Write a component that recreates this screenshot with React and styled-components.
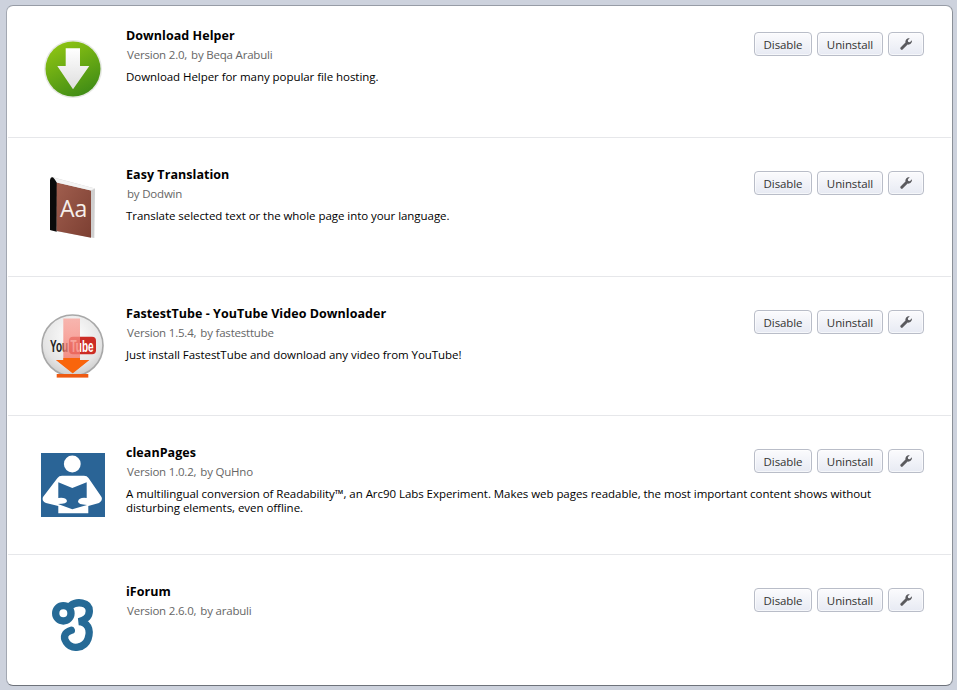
import React from "react";
import styled, { createGlobalStyle } from "styled-components";

const GlobalStyle = createGlobalStyle`
  html, body {
    margin: 0;
    height: 100%;
    background: #cdd2dd;
    overflow: hidden;
  }
`;

const Panel = styled.div`
  box-sizing: border-box;
  width: 947px;
  height: 681px;
  margin: 5px 0 0 6px;
  background: #fff;
  border: 1px solid #a3a8b2;
  border-top-color: #979ca6;
  border-bottom-color: #6d727a;
  border-right-color: #8b9098;
  border-radius: 7px;
  font-family: "Open Sans", "Noto Sans", sans-serif;
  color: #000;
`;

const Row = styled.div`
  box-sizing: border-box;
  display: grid;
  grid-template-columns: 64px 1fr auto;
  grid-template-rows: 19px 19px auto;
  column-gap: 21px;
  align-content: start;
  height: 139px;
  margin: 0 1px;
  padding: 27px 27px 0 33px;
  border-bottom: 1px solid #e6e7ea;

  &:first-child {
    height: 132px;
    padding-top: 20px;
  }
  &:last-child {
    height: 130px;
    border-bottom: none;
  }
`;

const IconBox = styled.div`
  grid-row: 1 / 4;
  width: 64px;
  height: 64px;
  margin-top: 10px;

  svg {
    display: block;
  }
`;

const Title = styled.div`
  grid-column: 2;
  grid-row: 1;
  padding-top: 1px;
  font-size: 12.5px;
  line-height: 18px;
  font-weight: 700;
  letter-spacing: 0.05px;
`;

const Meta = styled.div`
  grid-column: 2;
  grid-row: 2;
  display: flex;
  gap: 4px;
  padding: 2px 0 0 1px;
  font-size: 11.5px;
  line-height: 16px;
  color: #666;
  letter-spacing: -0.2px;
`;

const Description = styled.div`
  grid-column: 2 / 4;
  grid-row: 3;
  margin-top: 6px;
  padding-right: 40px;
  font-size: 11.5px;
  line-height: 14px;
  letter-spacing: -0.05px;
`;

const Actions = styled.div`
  grid-column: 3;
  grid-row: 1 / 3;
  display: flex;
  gap: 5px;
  margin-top: 6px;
`;

const Button = styled.button`
  box-sizing: border-box;
  display: flex;
  align-items: center;
  justify-content: center;
  width: ${(p) => p.$width}px;
  height: 24px;
  padding: 0;
  border: 1px solid #b9bdc8;
  border-radius: 4px;
  background: linear-gradient(#fbfbfd, #e7eaf3);
  box-shadow: inset 0 0 0 1px rgba(255, 255, 255, 0.6);
  font-family: inherit;
  font-size: 11.5px;
  letter-spacing: -0.1px;
  color: #333;
`;

const WrenchIcon = () => (
  <svg width="14" height="14" viewBox="0 0 14 14">
    <path
      d="M1.5 10.5L6.5 5.5C6 3 8 .8 10.8 1.2L8.8 3.2 9.2 4.9 10.9 5.3 12.9 3.3C13.3 6 11 8 8.6 7.6L3.6 12.6Q2.9 13.2 2 12.6L1.5 12Q1 11.2 1.5 10.5Z"
      fill="#5a5a5e"
    />
  </svg>
);

const DownloadIcon = () => (
  <svg width="64" height="64" viewBox="0 0 64 64">
    <defs>
      <linearGradient id="dl-green" x1="0.25" y1="0" x2="0.75" y2="1">
        <stop offset="0" stopColor="#8fc512" />
        <stop offset="1" stopColor="#3d8a16" />
      </linearGradient>
      <linearGradient id="dl-arrow" x1="0" y1="0" x2="0" y2="1">
        <stop offset="0" stopColor="#ffffff" />
        <stop offset="1" stopColor="#dedede" />
      </linearGradient>
    </defs>
    <circle cx="32" cy="33" r="29" fill="#e6e8e4" />
    <circle cx="32" cy="33" r="27.5" fill="url(#dl-green)" />
    <path d="M24.7 12.3H39V30H48.3L32 53.3 16.3 30H24.7Z" fill="url(#dl-arrow)" />
  </svg>
);

const BookIcon = () => (
  <svg width="64" height="64" viewBox="0 0 64 64">
    <defs>
      <linearGradient id="bk-cover" x1="0" y1="0" x2="1" y2="1">
        <stop offset="0" stopColor="#a05e4e" />
        <stop offset="1" stopColor="#7c3f32" />
      </linearGradient>
    </defs>
    <path d="M10 1.7L54 13.5 53.3 63 9 55V5Z" fill="#cfcfcf" />
    <path d="M9 5Q9.5 1.7 12 2.5L16 6.7 15.7 56.7 9 55Z" fill="#0a0a0a" />
    <path d="M15.7 7.5L50 15.5V62.7L15.7 56Z" fill="url(#bk-cover)" />
    <path d="M13 2.7L54 13.5 50 15.5 15.7 7.5Z" fill="#f4f4f4" />
    <text x="19" y="42" fontFamily="Open Sans, sans-serif" fontSize="23" fill="#f6efeb">Aa</text>
  </svg>
);

const TubeIcon = () => (
  <svg width="64" height="64" viewBox="0 0 64 64">
    <defs>
      <radialGradient id="ft-disc" cx="0.5" cy="0.35" r="0.75">
        <stop offset="0" stopColor="#ffffff" />
        <stop offset="0.65" stopColor="#e4e4e4" />
        <stop offset="1" stopColor="#bdbdbd" />
      </radialGradient>
      <linearGradient id="ft-arrow" x1="0" y1="0" x2="0" y2="1">
        <stop offset="0" stopColor="#f9a59c" />
        <stop offset="0.7" stopColor="#f3766a" />
        <stop offset="1" stopColor="#f3661a" />
      </linearGradient>
    </defs>
    <circle cx="31.5" cy="31.5" r="30.5" fill="url(#ft-disc)" stroke="#a8a8a8" strokeWidth="1.6" />
    <rect x="28" y="22.7" width="27" height="17.6" rx="4" fill="#cc2c25" />
    <text transform="translate(9 37.5) scale(0.59 1)" fontFamily="Liberation Sans, sans-serif" fontWeight="700" fontSize="17" fill="#222">You</text>
    <text transform="translate(29.5 37.5) scale(0.59 1)" fontFamily="Liberation Sans, sans-serif" fontWeight="700" fontSize="17" fill="#fff">Tube</text>
    <path d="M22.3 4.5H39V46H48.3L31.7 59.3 15 46H22.3Z" fill="url(#ft-arrow)" opacity="0.78" />
    <path d="M22.3 44H39V46H48.3L31.7 59.3 15 46H22.3Z" fill="#f9650c" />
    <rect x="15.7" y="60" width="31.6" height="3.6" fill="#ee5a12" />
  </svg>
);

const ReaderIcon = () => (
  <svg width="64" height="64" viewBox="0 0 64 64">
    <rect width="64" height="64" fill="#2a6496" />
    <circle cx="31.3" cy="11" r="8.4" fill="#fff" />
    <path
      d="M21 22.7H43Q46 22.7 47.5 25L60.5 44Q62 48 58 50L47.3 53V60.3H17.3V53L5 50Q0.5 48 2 44L16.5 25Q18 22.7 21 22.7Z"
      fill="#fff"
    />
    <path
      d="M17.3 29.3L31.3 35 45.7 29.3V45Q38 44 37 48.5 37 51.5 46 52L31.3 56.3 17 51Q26 51 26 48 25 44 17.3 45Z"
      fill="#2a6496"
    />
  </svg>
);

const LetterIcon = () => (
  <svg width="64" height="64" viewBox="0 0 64 64">
    <defs>
      <filter id="if-soft" x="-20%" y="-20%" width="140%" height="140%">
        <feGaussianBlur stdDeviation="0.8" />
      </filter>
    </defs>
    <g
      transform="translate(-11 -7) scale(0.3333)"
      fill="none"
      stroke="#256a96"
      strokeWidth="22"
      strokeLinecap="round"
      filter="url(#if-soft)"
    >
      <circle cx="100" cy="85" r="23" />
      <path d="M122 62C140 48 178 50 178 78 178 100 160 106 147 110 172 112 184 132 174 162 164 190 125 196 109 172 98 155 104 142 124 136" />
    </g>
  </svg>
);

const addons = [
  {
    name: "Download Helper",
    version: "Version 2.0,",
    author: "by Beqa Arabuli",
    text: "Download Helper for many popular file hosting.",
    Icon: DownloadIcon,
  },
  {
    name: "Easy Translation",
    author: "by Dodwin",
    text: "Translate selected text or the whole page into your language.",
    Icon: BookIcon,
  },
  {
    name: "FastestTube - YouTube Video Downloader",
    version: "Version 1.5.4,",
    author: "by fastesttube",
    text: "Just install FastestTube and download any video from YouTube!",
    Icon: TubeIcon,
  },
  {
    name: "cleanPages",
    version: "Version 1.0.2,",
    author: "by QuHno",
    text: "A multilingual conversion of Readability™, an Arc90 Labs Experiment. Makes web pages readable, the most important content shows without disturbing elements, even offline.",
    Icon: ReaderIcon,
  },
  {
    name: "iForum",
    version: "Version 2.6.0,",
    author: "by arabuli",
    Icon: LetterIcon,
  },
];

const App = () => (
  <>
    <GlobalStyle />
    <Panel>
      {addons.map(({ name, version, author, text, Icon }) => (
        <Row key={name}>
          <IconBox>
            <Icon />
          </IconBox>
          <Title>{name}</Title>
          <Meta>
            {version && <span>{version}</span>}
            <span>{author}</span>
          </Meta>
          {text && <Description>{text}</Description>}
          <Actions>
            <Button $width={58}>Disable</Button>
            <Button $width={66}>Uninstall</Button>
            <Button $width={36}>
              <WrenchIcon />
            </Button>
          </Actions>
        </Row>
      ))}
    </Panel>
  </>
);

export default App;
